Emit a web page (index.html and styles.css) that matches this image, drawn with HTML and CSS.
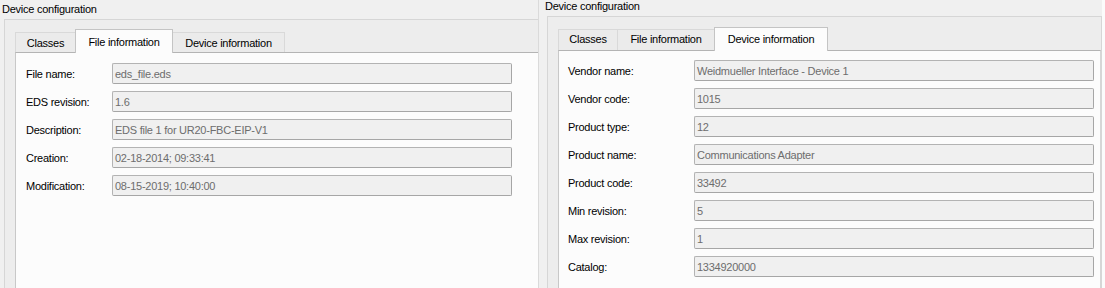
FILE: index.html
```html
<!DOCTYPE html>
<html lang="en">
<head>
<meta charset="utf-8">
<title>Device configuration</title>
<link rel="stylesheet" href="styles.css">
</head>
<body>
<div class="shots">
  <section class="shot shot-left">
    <div class="title">Device configuration</div>
    <div class="group">
      <div class="tabs">
        <div class="tab tab-classes">Classes</div>
        <div class="tab tab-file active">File information</div>
        <div class="tab tab-device">Device information</div>
      </div>
      <div class="pane">
        <div class="form">
          <span class="label">File name:</span><span class="field">eds_file.eds</span>
          <span class="label">EDS revision:</span><span class="field">1.6</span>
          <span class="label">Description:</span><span class="field">EDS file 1 for UR20-FBC-EIP-V1</span>
          <span class="label">Creation:</span><span class="field">02-18-2014; 09:33:41</span>
          <span class="label">Modification:</span><span class="field">08-15-2019; 10:40:00</span>
        </div>
      </div>
    </div>
  </section>
  <section class="shot shot-right">
    <div class="title">Device configuration</div>
    <div class="group">
      <div class="tabs">
        <div class="tab tab-classes">Classes</div>
        <div class="tab tab-file">File information</div>
        <div class="tab tab-device active">Device information</div>
      </div>
      <div class="pane">
        <div class="form">
          <span class="label">Vendor name:</span><span class="field">Weidmueller Interface - Device 1</span>
          <span class="label">Vendor code:</span><span class="field">1015</span>
          <span class="label">Product type:</span><span class="field">12</span>
          <span class="label">Product name:</span><span class="field">Communications Adapter</span>
          <span class="label">Product code:</span><span class="field">33492</span>
          <span class="label">Min revision:</span><span class="field">5</span>
          <span class="label">Max revision:</span><span class="field">1</span>
          <span class="label">Catalog:</span><span class="field">1334920000</span>
        </div>
      </div>
    </div>
  </section>
</div>
</body>
</html>
```

FILE: styles.css
```css
* { box-sizing: border-box; }

html, body {
  margin: 0;
  padding: 0;
  background: #f0f0f0;
}

body {
  font-family: "Liberation Sans", Arial, sans-serif;
  font-size: 11px;
  letter-spacing: -0.25px;
  color: #000;
}

.shots {
  display: flex;
  width: 1105px;
  height: 288px;
  overflow: hidden;
}

.shot {
  flex: none;
  height: 288px;
  overflow: hidden;
  display: flex;
  flex-direction: column;
  background: #f0f0f0;
}

.shot-left {
  width: 539px;
  border-right: 1px solid #dadada;
}

.shot-right {
  width: 566px;
  background: linear-gradient(to right, #f0f0f0 563px, #fbfbfb 563px);
}

.title {
  line-height: 13px;
  white-space: nowrap;
}

.shot-left .title {
  height: 19px;
  padding: 3px 0 0 2px;
}

.shot-right .title {
  height: 16px;
  padding: 0 0 0 6px;
}

.group {
  flex: 1;
  display: flex;
  flex-direction: column;
  border: 1px solid #d6d6d6;
  border-bottom: none;
  background: #ededed;
  min-height: 0;
}

.shot-left .group {
  margin-left: 4px;
  border-right: none;
}

.shot-right .group {
  margin-left: 8px;
  margin-right: 3px;
}

.tabs {
  flex: none;
  display: flex;
  align-items: flex-end;
  padding-left: 10px;
  position: relative;
  z-index: 1;
}

.shot-left .tabs { height: 32px; }
.shot-right .tabs { height: 33px; }

.tab {
  flex: none;
  text-align: center;
  white-space: nowrap;
  line-height: 13px;
  background: #ebebeb;
  border: 1px solid #d9d9d9;
  border-bottom: none;
  margin-left: -1px;
}

.tab:first-child { margin-left: 0; }

.tab.active {
  background: #fcfcfc;
  border-color: #c4c4c4;
  margin-bottom: -1px;
  position: relative;
  z-index: 2;
}

.tab-classes { width: 61px; }
.tab-file { width: 98px; }
.tab-device { width: 113px; }

.shot-right .tab-classes { width: 60px; }
.shot-right .tab-device { width: 114px; }

.shot-left .tab { height: 20px; padding-top: 4px; }
.shot-left .tab.active { height: 24px; padding-top: 6px; }

.shot-right .tab { height: 21px; padding-top: 3px; }
.shot-right .tab.active { height: 24px; padding-top: 5px; }

.pane {
  flex: 1;
  margin-left: 10px;
  background: #fcfcfc;
  border-top: 1px solid #b4b4b4;
  border-left: 1px solid #c8c8c8;
}

.shot-left .pane {
  padding: 10px 0 0 10px;
  margin-right: -20px;
}

.shot-right .pane {
  padding: 9px 0 0 9px;
  border-right: 1px solid #d6d6d6;
}

.form {
  display: grid;
  row-gap: 7px;
  align-items: start;
}

.shot-left .form { grid-template-columns: 86px 400px; }
.shot-right .form { grid-template-columns: 126px 400px; }

.label {
  height: 21px;
  line-height: 13px;
  padding-top: 5px;
  white-space: nowrap;
}

.field {
  height: 21px;
  line-height: 13px;
  padding: 4px 0 0 2px;
  background: #f0f0f0;
  border: 1px solid #b3b3b3;
  border-right-color: #a6a6a6;
  border-bottom-color: #a6a6a6;
  border-radius: 2px;
  color: #6d6d6d;
  white-space: nowrap;
  overflow: hidden;
}
```
